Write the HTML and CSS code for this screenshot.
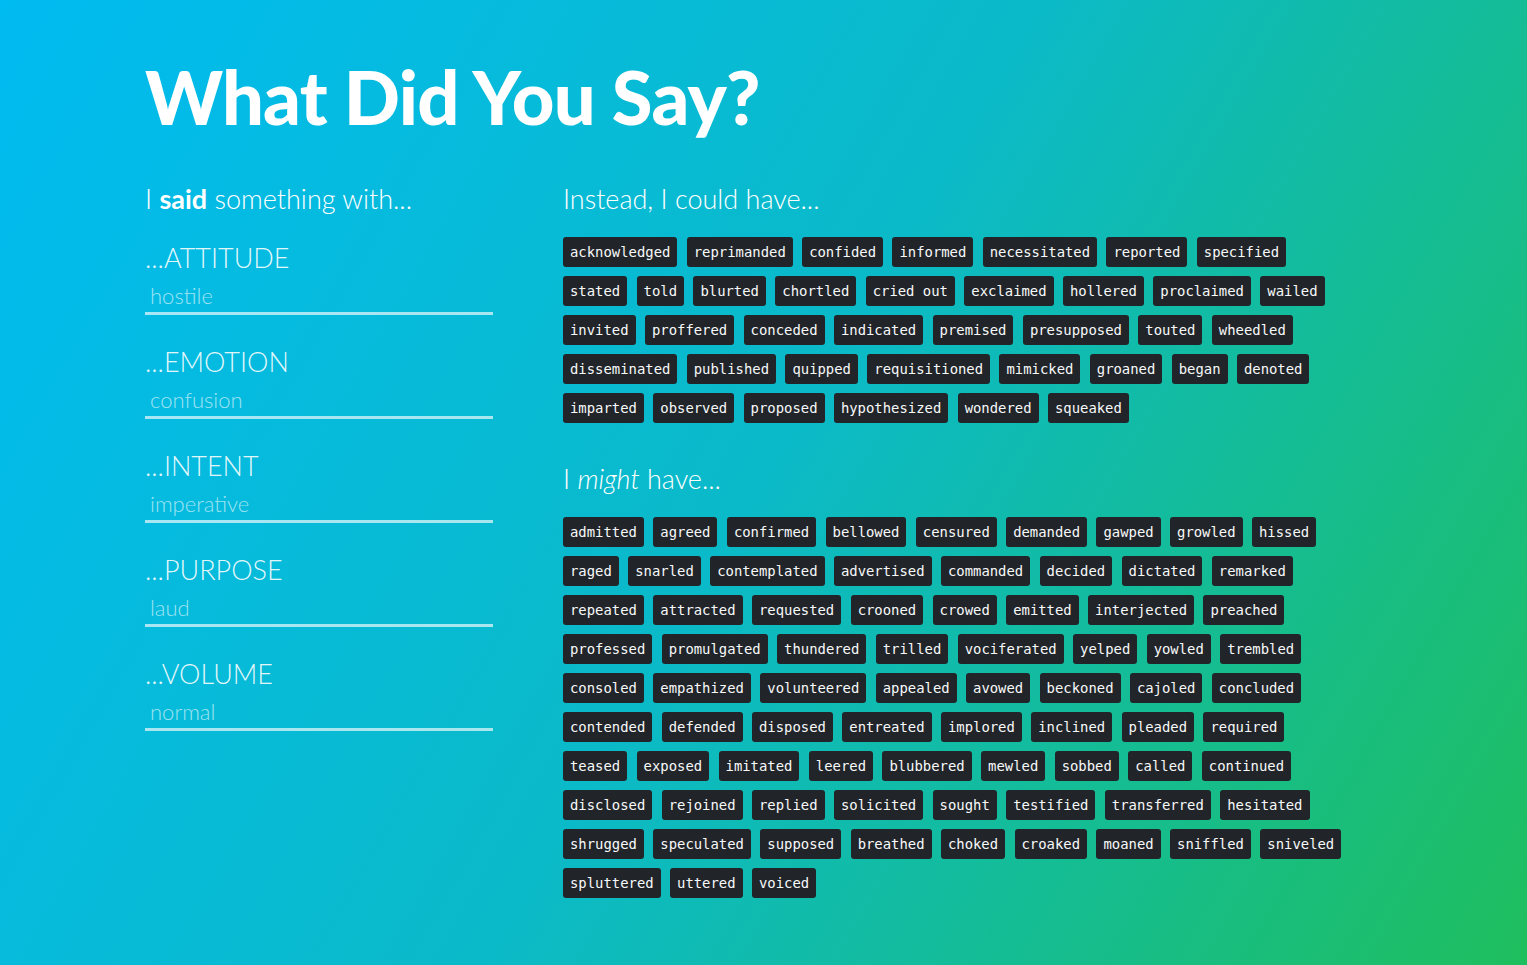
FILE: index.html
```html
<!DOCTYPE html>
<html lang="en">
<head>
<meta charset="utf-8">
<title>What Did You Say?</title>
<link rel="stylesheet" href="styles.css">
</head>
<body>
<main class="page">
  <h1 class="title">What Did You Say?</h1>
  <div class="columns">
    <section class="left">
      <h2 class="heading">I <b>said</b> something with...</h2>
      <div class="field">
        <label class="label" for="f1">...ATTITUDE</label>
        <input class="input" id="f1" type="text" value="hostile">
      </div>
      <div class="field">
        <label class="label" for="f2">...EMOTION</label>
        <input class="input" id="f2" type="text" value="confusion">
      </div>
      <div class="field">
        <label class="label" for="f3">...INTENT</label>
        <input class="input" id="f3" type="text" value="imperative">
      </div>
      <div class="field">
        <label class="label" for="f4">...PURPOSE</label>
        <input class="input" id="f4" type="text" value="laud">
      </div>
      <div class="field">
        <label class="label" for="f5">...VOLUME</label>
        <input class="input" id="f5" type="text" value="normal">
      </div>
    </section>
    <section class="right">
      <h2 class="heading">Instead, I could have...</h2>
      <div class="tags">
        <span class="tag">acknowledged</span><span class="tag">reprimanded</span><span class="tag">confided</span><span class="tag">informed</span><span class="tag">necessitated</span><span class="tag">reported</span><span class="tag">specified</span>
        <span class="tag">stated</span><span class="tag">told</span><span class="tag">blurted</span><span class="tag">chortled</span><span class="tag">cried out</span><span class="tag">exclaimed</span><span class="tag">hollered</span><span class="tag">proclaimed</span><span class="tag">wailed</span>
        <span class="tag">invited</span><span class="tag">proffered</span><span class="tag">conceded</span><span class="tag">indicated</span><span class="tag">premised</span><span class="tag">presupposed</span><span class="tag">touted</span><span class="tag">wheedled</span>
        <span class="tag">disseminated</span><span class="tag">published</span><span class="tag">quipped</span><span class="tag">requisitioned</span><span class="tag">mimicked</span><span class="tag">groaned</span><span class="tag">began</span><span class="tag">denoted</span>
        <span class="tag">imparted</span><span class="tag">observed</span><span class="tag">proposed</span><span class="tag">hypothesized</span><span class="tag">wondered</span><span class="tag">squeaked</span>
      </div>
      <h2 class="heading heading-second">I <i>might</i> have...</h2>
      <div class="tags">
        <span class="tag">admitted</span><span class="tag">agreed</span><span class="tag">confirmed</span><span class="tag">bellowed</span><span class="tag">censured</span><span class="tag">demanded</span><span class="tag">gawped</span><span class="tag">growled</span><span class="tag">hissed</span>
        <span class="tag">raged</span><span class="tag">snarled</span><span class="tag">contemplated</span><span class="tag">advertised</span><span class="tag">commanded</span><span class="tag">decided</span><span class="tag">dictated</span><span class="tag">remarked</span>
        <span class="tag">repeated</span><span class="tag">attracted</span><span class="tag">requested</span><span class="tag">crooned</span><span class="tag">crowed</span><span class="tag">emitted</span><span class="tag">interjected</span><span class="tag">preached</span>
        <span class="tag">professed</span><span class="tag">promulgated</span><span class="tag">thundered</span><span class="tag">trilled</span><span class="tag">vociferated</span><span class="tag">yelped</span><span class="tag">yowled</span><span class="tag">trembled</span>
        <span class="tag">consoled</span><span class="tag">empathized</span><span class="tag">volunteered</span><span class="tag">appealed</span><span class="tag">avowed</span><span class="tag">beckoned</span><span class="tag">cajoled</span><span class="tag">concluded</span>
        <span class="tag">contended</span><span class="tag">defended</span><span class="tag">disposed</span><span class="tag">entreated</span><span class="tag">implored</span><span class="tag">inclined</span><span class="tag">pleaded</span><span class="tag">required</span>
        <span class="tag">teased</span><span class="tag">exposed</span><span class="tag">imitated</span><span class="tag">leered</span><span class="tag">blubbered</span><span class="tag">mewled</span><span class="tag">sobbed</span><span class="tag">called</span><span class="tag">continued</span>
        <span class="tag">disclosed</span><span class="tag">rejoined</span><span class="tag">replied</span><span class="tag">solicited</span><span class="tag">sought</span><span class="tag">testified</span><span class="tag">transferred</span><span class="tag">hesitated</span>
        <span class="tag">shrugged</span><span class="tag">speculated</span><span class="tag">supposed</span><span class="tag">breathed</span><span class="tag">choked</span><span class="tag">croaked</span><span class="tag">moaned</span><span class="tag">sniffled</span><span class="tag">sniveled</span>
        <span class="tag">spluttered</span><span class="tag">uttered</span><span class="tag">voiced</span>
      </div>
    </section>
  </div>
</main>
</body>
</html>
```

FILE: styles.css
```css
html, body {
  margin: 0;
  padding: 0;
}

body {
  min-height: 965px;
  background: linear-gradient(120deg, #00bbf1 0%, #0bbac8 50%, #1fbf5e 100%);
  font-family: Lato, "Open Sans", sans-serif;
  color: #ffffff;
}

.page {
  padding: 60px 0 40px 145px;
}

.title {
  margin: 0;
  font-family: Lato, sans-serif;
  font-weight: 900;
  font-size: 74px;
  line-height: 74px;
  letter-spacing: -0.75px;
  color: #ffffff;
}

.columns {
  display: flex;
  gap: 70px;
  margin-top: 47.3px;
}

.left {
  width: 348px;
  flex: none;
}

.right {
  width: 790px;
  flex: none;
}

.heading {
  margin: 0;
  font-family: Lato, sans-serif;
  font-weight: 300;
  font-size: 27px;
  line-height: 35px;
  color: #ffffff;
}

.heading b {
  font-weight: 700;
}

.heading i {
  font-style: italic;
  font-weight: 300;
}

.heading-second {
  margin-top: 38.6px;
}

.field {
  display: flex;
  flex-direction: column;
  margin-top: 31.3px;
}

.field:first-of-type {
  margin-top: 26px;
}

.label {
  font-family: Lato, sans-serif;
  font-weight: 300;
  font-size: 27px;
  line-height: 32px;
  color: rgba(255, 255, 255, 0.9);
}

.input {
  margin-top: 8.3px;
  padding: 0 5px 3px 5px;
  border: 0;
  border-bottom: 3px solid rgba(255, 255, 255, 0.65);
  background: transparent;
  outline: none;
  font-family: Lato, sans-serif;
  font-weight: 300;
  font-size: 22px;
  line-height: 26.4px;
  height: 26.4px;
  box-sizing: content-box;
  color: rgba(255, 255, 255, 0.62);
  width: 338px;
}

.tags {
  display: flex;
  flex-wrap: wrap;
  gap: 9px 9.4px;
  margin-top: 20.4px;
}

.tag {
  display: block;
  height: 30px;
  line-height: 30px;
  padding: 0 7px;
  background: #212529;
  color: #f8f9fa;
  border-radius: 3px;
  font-family: "DejaVu Sans Mono", "Liberation Mono", monospace;
  font-size: 13.9px;
  white-space: pre;
}
```
